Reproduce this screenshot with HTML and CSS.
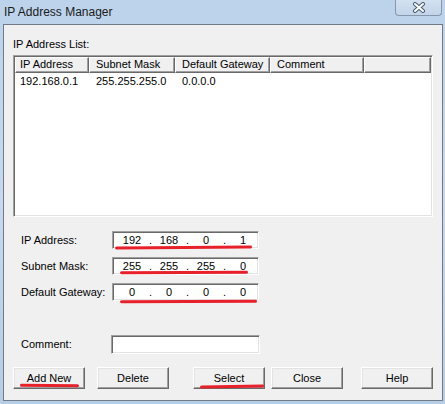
FILE: index.html
```html
<!DOCTYPE html>
<html>
<head>
<meta charset="utf-8">
<title>IP Address Manager</title>
<link rel="stylesheet" href="styles.css">
</head>
<body>
<div class="window">
  <div class="titlebar">
    <span class="title">IP Address Manager</span>
    <div class="close">
      <svg width="14" height="11" viewBox="0 0 14 11">
        <path d="M3 2 L11 9 M11 2 L3 9" stroke="#4a5a6e" stroke-width="4" stroke-linecap="round" fill="none"/>
        <path d="M3 2 L11 9 M11 2 L3 9" stroke="#ffffff" stroke-width="2" stroke-linecap="round" fill="none"/>
      </svg>
    </div>
  </div>
  <div class="client">
    <div class="list-label">IP Address List:</div>
    <div class="listview">
      <div class="header">
        <div class="hcell c1">IP Address</div>
        <div class="hcell c2">Subnet Mask</div>
        <div class="hcell c3">Default Gateway</div>
        <div class="hcell c4">Comment</div>
        <div class="hcell c5"></div>
      </div>
      <div class="row">
        <div class="cell c1">192.168.0.1</div>
        <div class="cell c2">255.255.255.0</div>
        <div class="cell c3">0.0.0.0</div>
        <div class="cell c4"></div>
      </div>
    </div>

    <div class="fields">
      <div class="flabel">IP Address:</div>
      <div class="ipbox">
        <span class="oct">192</span><span class="dot">.</span><span class="oct">168</span><span class="dot">.</span><span class="oct">0</span><span class="dot">.</span><span class="oct">1</span>
        <span class="mark m1"></span>
      </div>
      <div class="flabel">Subnet Mask:</div>
      <div class="ipbox">
        <span class="oct">255</span><span class="dot">.</span><span class="oct">255</span><span class="dot">.</span><span class="oct">255</span><span class="dot">.</span><span class="oct">0</span>
        <span class="mark m2"></span>
      </div>
      <div class="flabel">Default Gateway:</div>
      <div class="ipbox">
        <span class="oct">0</span><span class="dot">.</span><span class="oct">0</span><span class="dot">.</span><span class="oct">0</span><span class="dot">.</span><span class="oct">0</span>
        <span class="mark m3"></span>
      </div>
    </div>

    <div class="comment-row">
      <div class="flabel">Comment:</div>
      <div class="textbox"></div>
    </div>

    <div class="buttons">
      <div class="btn b-add">Add New<span class="mark m4"></span></div>
      <div class="btn b-del">Delete</div>
      <div class="btn b-sel">Select<span class="mark m5"></span></div>
      <div class="btn b-close">Close</div>
      <div class="btn b-help">Help</div>
    </div>
  </div>
</div>
</body>
</html>
```

FILE: styles.css
```css
* { box-sizing: border-box; }
html, body { margin: 0; padding: 0; }
body {
  width: 445px;
  height: 404px;
  overflow: hidden;
  background: linear-gradient(to bottom, #bcd3eb 0%, #c6d9ee 50%, #b6cde6 100%);
  font-family: "Liberation Sans", Arial, sans-serif;
  font-size: 11px;
  color: #000;
}
.window {
  display: flex;
  flex-direction: column;
  height: 404px;
}
.titlebar {
  height: 24px;
  display: flex;
  align-items: flex-start;
}
.title {
  font-family: "Liberation Sans", Arial, sans-serif;
  font-size: 12px;
  line-height: 14px;
  padding: 5px 0 0 4px;
  color: #1a1a1a;
}
.close {
  margin-left: auto;
  margin-right: 3px;
  width: 47px;
  height: 16px;
  border: 1px solid #8797ab;
  border-top: none;
  border-radius: 0 0 4px 4px;
  background: linear-gradient(to bottom, #d3e1f0, #c2d4e9);
  display: flex;
  align-items: center;
  justify-content: center;
  padding-bottom: 1px;
}
.client {
  margin-left: 3px;
  width: 440px;
  height: 377px;
  border: 1px solid #6f7b89;
  background: #f0f0f0;
  padding: 13px 0 0 9px;
  display: flex;
  flex-direction: column;
}
.list-label {
  height: 13px;
  line-height: 13px;
}
.listview {
  margin-top: 4px;
  width: 420px;
  height: 162px;
  border: 1px solid;
  border-color: #a0a0a0 #ffffff #ffffff #a0a0a0;
  box-shadow: inset 1px 1px #696969, inset -1px -1px #e3e3e3;
  padding: 1px;
  background: #fff;
}
.header {
  display: flex;
  height: 16px;
  background: #f0f0f0;
}
.hcell {
  height: 16px;
  line-height: 13px;
  border-style: solid;
  border-width: 1px;
  border-color: #ffffff #696969 #696969 #ffffff;
  box-shadow: inset -1px -1px #a0a0a0;
  padding-left: 6px;
  white-space: nowrap;
  overflow: hidden;
}
.c1 { width: 74px; padding-left: 4px; }
.c2 { width: 86px; }
.c3 { width: 95px; }
.c4 { width: 94px; }
.c5 { flex: 1; }
.row {
  display: flex;
  height: 13px;
  line-height: 14px;
  margin-top: 1px;
}
.cell {
  padding-left: 7px;
  white-space: nowrap;
}
.row .c1 { padding-left: 5px; }

.fields {
  margin-top: 14px;
  display: grid;
  grid-template-columns: 99px 147px;
  grid-auto-rows: 18px;
  row-gap: 8px;
  align-items: center;
}
.flabel {
  padding-left: 8px;
  line-height: 13px;
}
.ipbox {
  position: relative;
  height: 18px;
  background: #fff;
  border: 1px solid;
  border-color: #a0a0a0 #ffffff #ffffff #a0a0a0;
  box-shadow: inset 1px 1px #696969, inset -1px -1px #e3e3e3;
  display: grid;
  grid-template-columns: 26px 11px 26px 11px 26px 11px 26px;
  padding-left: 6px;
  align-items: center;
  line-height: 14px;
  text-align: center;
}
.comment-row {
  margin-top: 34px;
  display: grid;
  grid-template-columns: 98px 149px;
  align-items: center;
}
.textbox {
  height: 19px;
  background: #fff;
  border: 1px solid;
  border-color: #a0a0a0 #ffffff #ffffff #a0a0a0;
  box-shadow: inset 1px 1px #696969, inset -1px -1px #e3e3e3;
}
.buttons {
  margin-top: 13px;
  display: flex;
}
.btn {
  position: relative;
  width: 72px;
  height: 22px;
  line-height: 20px;
  text-align: center;
  background: #f0f0f0;
  border: 1px solid;
  border-color: #ffffff #696969 #696969 #ffffff;
  box-shadow: inset -1px -1px #a0a0a0, inset 1px 1px #e3e3e3;
}
.b-del { margin-left: 12px; }
.b-sel { margin-left: 24px; }
.b-close { margin-left: 6px; }
.b-help { margin-left: 18px; }

.mark {
  position: absolute;
  height: 3px;
  background: #e8202a;
  border-radius: 2px;
}
.m1 { left: 2px; top: 14px; width: 137px; transform: rotate(-0.4deg); }
.m2 { left: 7px; top: 13px; width: 128px; transform: rotate(-0.3deg); }
.m3 { left: 7px; top: 16px; width: 137px; transform: rotate(-0.3deg); }
.m4 { left: 6px; top: 16px; width: 59px; transform: rotate(0.4deg); }
.m5 { left: 6px; top: 17px; width: 64px; transform: rotate(-0.8deg); }
```
